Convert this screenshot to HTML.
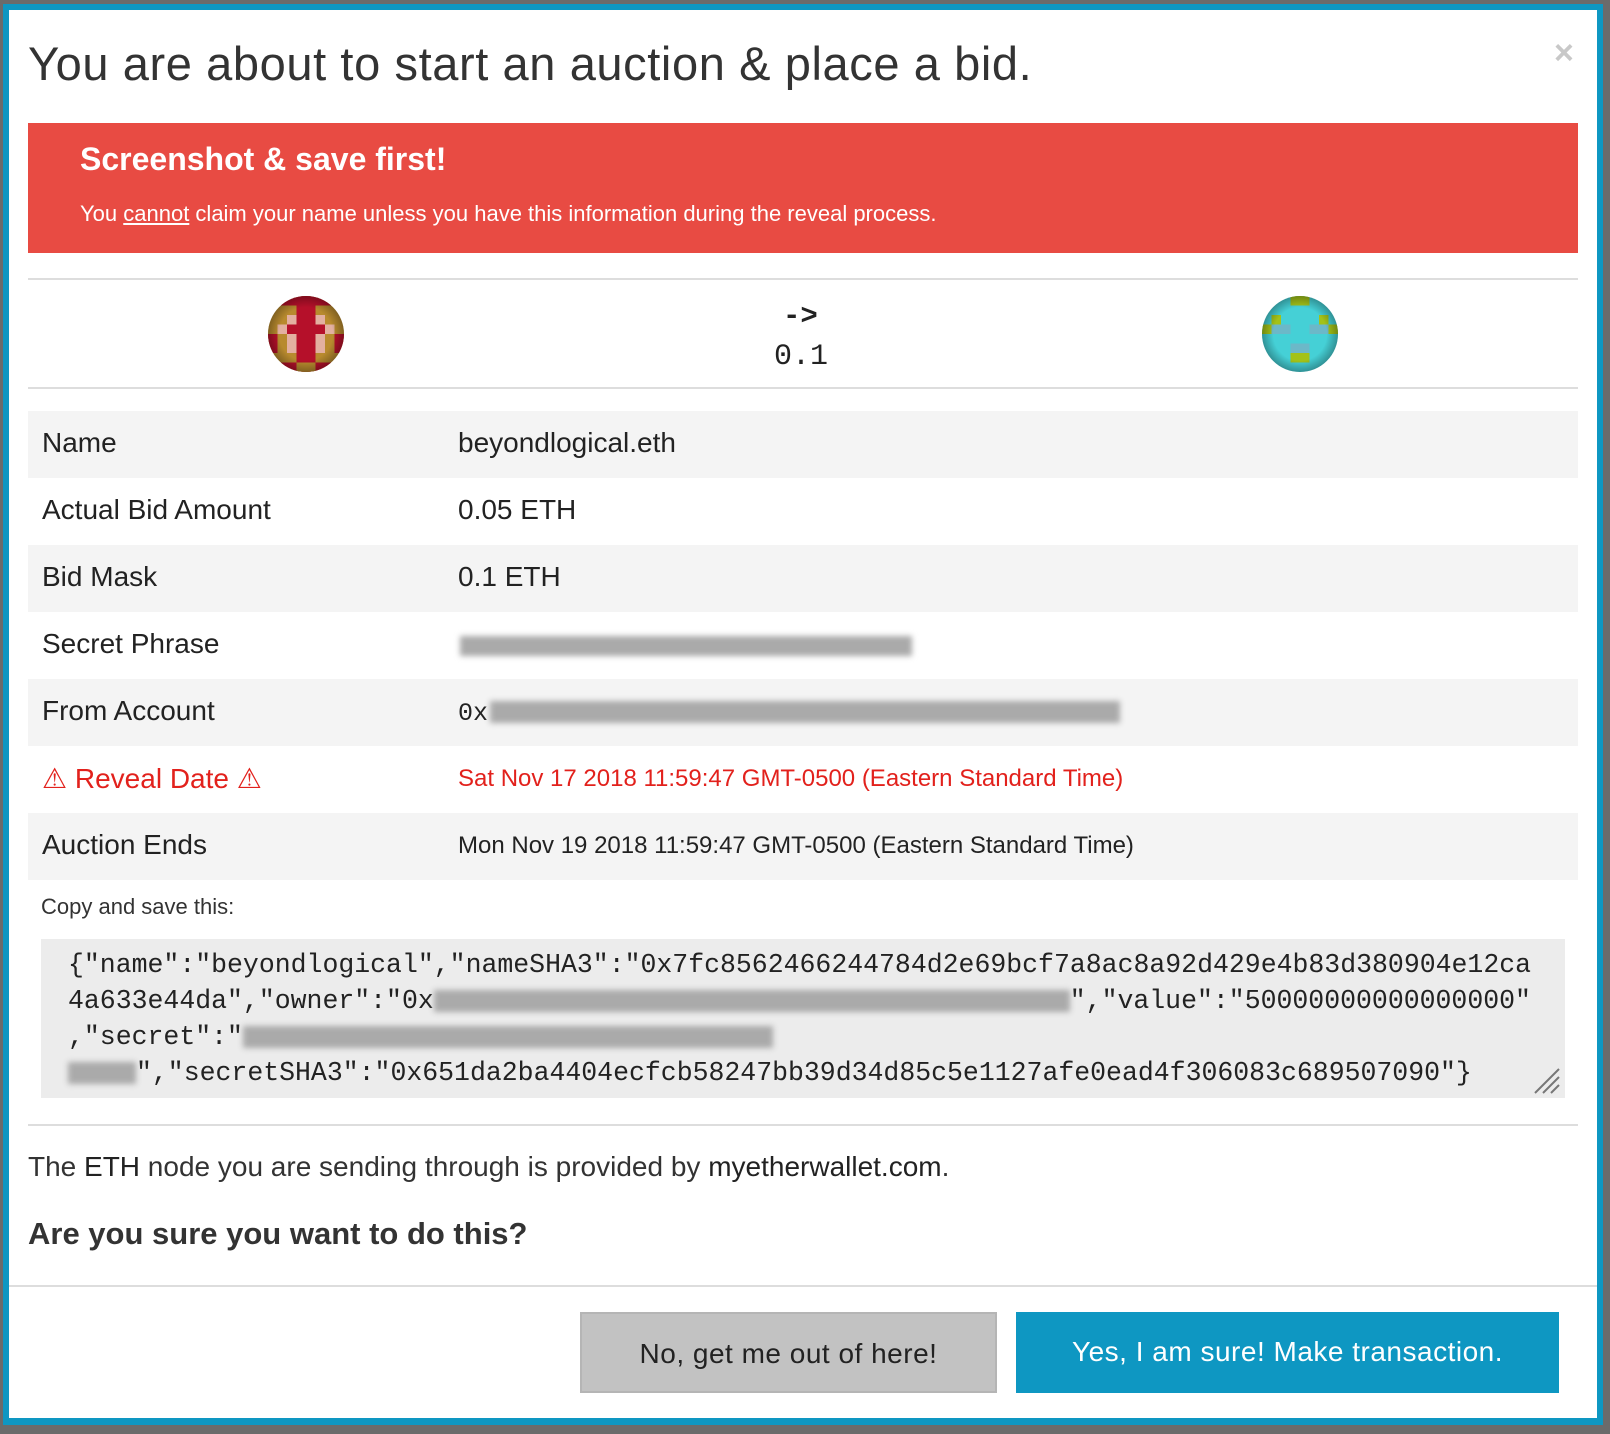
<!DOCTYPE html>
<html><head><meta charset="utf-8"><style>
*{margin:0;padding:0;box-sizing:border-box}
body{width:1610px;height:1434px;background:#6b6b6b;position:relative;overflow:hidden;font-family:"Liberation Sans",sans-serif;color:#222}
.frame{position:absolute;left:3px;top:4px;width:1600px;height:1421px;background:#0e97c2}
.modal{position:absolute;left:9px;top:10px;width:1588px;height:1408px;background:#fff}
.a{position:absolute;white-space:nowrap}
.title{left:19px;top:26px;font-size:47px;font-weight:300;color:#333;letter-spacing:0.6px}
.close{left:1545px;top:24px;font-size:34px;color:#c8c8c8;font-weight:bold}
.alert{left:19px;top:113px;width:1550px;height:130px;background:#e84b43;color:#fff}
.hr{position:absolute;left:19px;width:1550px;height:2px;background:#ddd}
.row{position:absolute;left:19px;width:1550px;height:67px;font-size:28px;color:#222}
.row.g{background:#f4f4f4}
.row .l{position:absolute;left:14px;top:16px}
.row .v{position:absolute;left:430px;top:16px}
.blur{position:absolute;background:#aaa;filter:blur(3px)}
.ta{left:32px;top:929px;width:1524px;height:159px;background:#ececec}
.ta pre{position:absolute;left:27px;top:8px;font-family:"Liberation Mono",monospace;font-size:26.5px;line-height:36px;color:#222}
.btn{position:absolute;top:1302px;height:81px;font-size:28px;text-align:center;line-height:79px;letter-spacing:0.5px}
</style></head><body>
<div class="frame"></div>
<div class="modal">
<div class="a title">You are about to start an auction &amp; place a bid.</div>
<div class="a close">×</div>
<div class="a alert">
 <div class="a" style="left:52px;top:18px;font-size:32px;font-weight:bold">Screenshot &amp; save first!</div>
 <div class="a" style="left:52px;top:78px;font-size:22px">You <u>cannot</u> claim your name unless you have this information during the reveal process.</div>
</div>
<div class="hr" style="top:268px"></div>
<svg class="a" style="left:259px;top:286px" width="76" height="76" viewBox="0 0 8 8">
 <defs><clipPath id="c1"><circle cx="4" cy="4" r="4"/></clipPath><radialGradient id="sh"><stop offset="0.7" stop-color="#000" stop-opacity="0"/><stop offset="1" stop-color="#000" stop-opacity="0.3"/></radialGradient></defs>
 <g clip-path="url(#c1)" shape-rendering="crispEdges">
 <rect width="8" height="8" fill="#b88a2e"/>
 <rect x="0" y="0" width="8" height="1" fill="#b5102a"/>
 <rect x="2" y="2" width="4" height="3" fill="#b5102a"/>
 <rect x="3" y="1" width="2" height="6" fill="#b5102a"/>
 <rect x="2" y="2" width="1" height="1" fill="#e3b0a0"/><rect x="5" y="2" width="1" height="1" fill="#e3b0a0"/>
 <rect x="1" y="3" width="1" height="1" fill="#e3b0a0"/><rect x="6" y="3" width="1" height="1" fill="#e3b0a0"/>
 <rect x="2" y="4" width="1" height="2" fill="#e3b0a0"/><rect x="5" y="4" width="1" height="2" fill="#e3b0a0"/>
 <rect x="0" y="4" width="1" height="2" fill="#b5102a"/><rect x="7" y="4" width="1" height="2" fill="#b5102a"/>
 <rect x="0" y="7" width="8" height="1" fill="#b5102a"/><rect x="3" y="7" width="2" height="1" fill="#b88a2e"/>
 </g><circle cx="4" cy="4" r="4" fill="url(#sh)"/></svg>
<div class="a" style="left:774px;top:290px;font-family:'Liberation Mono',monospace;font-size:29px;font-weight:bold">-&gt;</div>
<div class="a" style="left:765px;top:330px;font-family:'Liberation Mono',monospace;font-size:30px">0.1</div>
<svg class="a" style="left:1253px;top:286px" width="76" height="76" viewBox="0 0 8 8">
 <defs><clipPath id="c2"><circle cx="4" cy="4" r="4"/></clipPath></defs>
 <g clip-path="url(#c2)" shape-rendering="crispEdges">
 <rect width="8" height="8" fill="#45d0d6"/>
 <rect x="3" y="0" width="2" height="1" fill="#a3c218"/>
 <rect x="1" y="2" width="1" height="1" fill="#a3c218"/><rect x="6" y="2" width="1" height="1" fill="#a3c218"/>
 <rect x="0" y="3" width="1" height="1" fill="#a3c218"/><rect x="7" y="3" width="1" height="1" fill="#a3c218"/>
 <rect x="1" y="3" width="2" height="1" fill="#6cb8c8"/><rect x="5" y="3" width="2" height="1" fill="#6cb8c8"/>
 <rect x="3" y="5" width="2" height="1" fill="#6cb8c8"/>
 <rect x="3" y="6" width="2" height="1" fill="#a3c218"/>
 </g><circle cx="4" cy="4" r="4" fill="url(#sh)"/></svg>
<div class="hr" style="top:377px"></div>

<div class="row g" style="top:401px"><span class="l">Name</span><span class="v">beyondlogical.eth</span></div>
<div class="row" style="top:468px"><span class="l">Actual Bid Amount</span><span class="v">0.05 ETH</span></div>
<div class="row g" style="top:535px"><span class="l">Bid Mask</span><span class="v">0.1 ETH</span></div>
<div class="row" style="top:602px"><span class="l">Secret Phrase</span><div class="blur" style="left:432px;top:24px;width:452px;height:20px"></div></div>
<div class="row g" style="top:669px"><span class="l">From Account</span><span class="v" style="font-family:'Liberation Mono',monospace;font-size:25px;top:20px">0x</span><div class="blur" style="left:462px;top:22px;width:630px;height:22px"></div></div>
<div class="row" style="top:736px;color:#e2211c"><span class="l">⚠ Reveal Date ⚠</span><span class="v" style="font-size:24px;top:19px">Sat Nov 17 2018 11:59:47 GMT-0500 (Eastern Standard Time)</span></div>
<div class="row g" style="top:803px"><span class="l">Auction Ends</span><span class="v" style="font-size:24px;top:19px">Mon Nov 19 2018 11:59:47 GMT-0500 (Eastern Standard Time)</span></div>

<div class="a" style="left:32px;top:884px;font-size:22px;color:#333;font-weight:300">Copy and save this:</div>
<div class="a ta"><pre>{"name":"beyondlogical","nameSHA3":"0x7fc8562466244784d2e69bcf7a8ac8a92d429e4b83d380904e12ca
4a633e44da","owner":"0x<span style="display:inline-block;width:636px;height:22px;background:#aaa;filter:blur(3px);vertical-align:middle"></span>","value":"50000000000000000"
,"secret":"<span style="display:inline-block;width:530px;height:22px;background:#aaa;filter:blur(3px);vertical-align:middle"></span>
<span style="display:inline-block;width:68px;height:22px;background:#aaa;filter:blur(3px);vertical-align:middle"></span>","secretSHA3":"0x651da2ba4404ecfcb58247bb39d34d85c5e1127afe0ead4f306083c689507090"}</pre>
<svg class="a" style="left:1492px;top:128px" width="28" height="28"><path d="M2 26L26 2M10 26L26 10M18 26L26 18" stroke="#777" stroke-width="2"/></svg></div>
<div class="hr" style="top:1114px"></div>
<div class="a" style="left:19px;top:1141px;font-size:28px;color:#333;font-weight:300">The <b style="font-weight:normal;color:#222">ETH</b> node you are sending through is provided by <span style="color:#222">myetherwallet.com</span>.</div>
<div class="a" style="left:19px;top:1206px;font-size:31px;font-weight:bold;color:#333">Are you sure you want to do this?</div>
<div class="hr" style="top:1275px;left:0;width:1588px"></div>
<div class="btn" style="left:571px;width:417px;background:#c2c2c2;border:2px solid #b5b5b5;color:#222">No, get me out of here!</div>
<div class="btn" style="left:1007px;width:543px;background:#0e97c2;color:#fff">Yes, I am sure! Make transaction.</div>
</div>
</body></html>
